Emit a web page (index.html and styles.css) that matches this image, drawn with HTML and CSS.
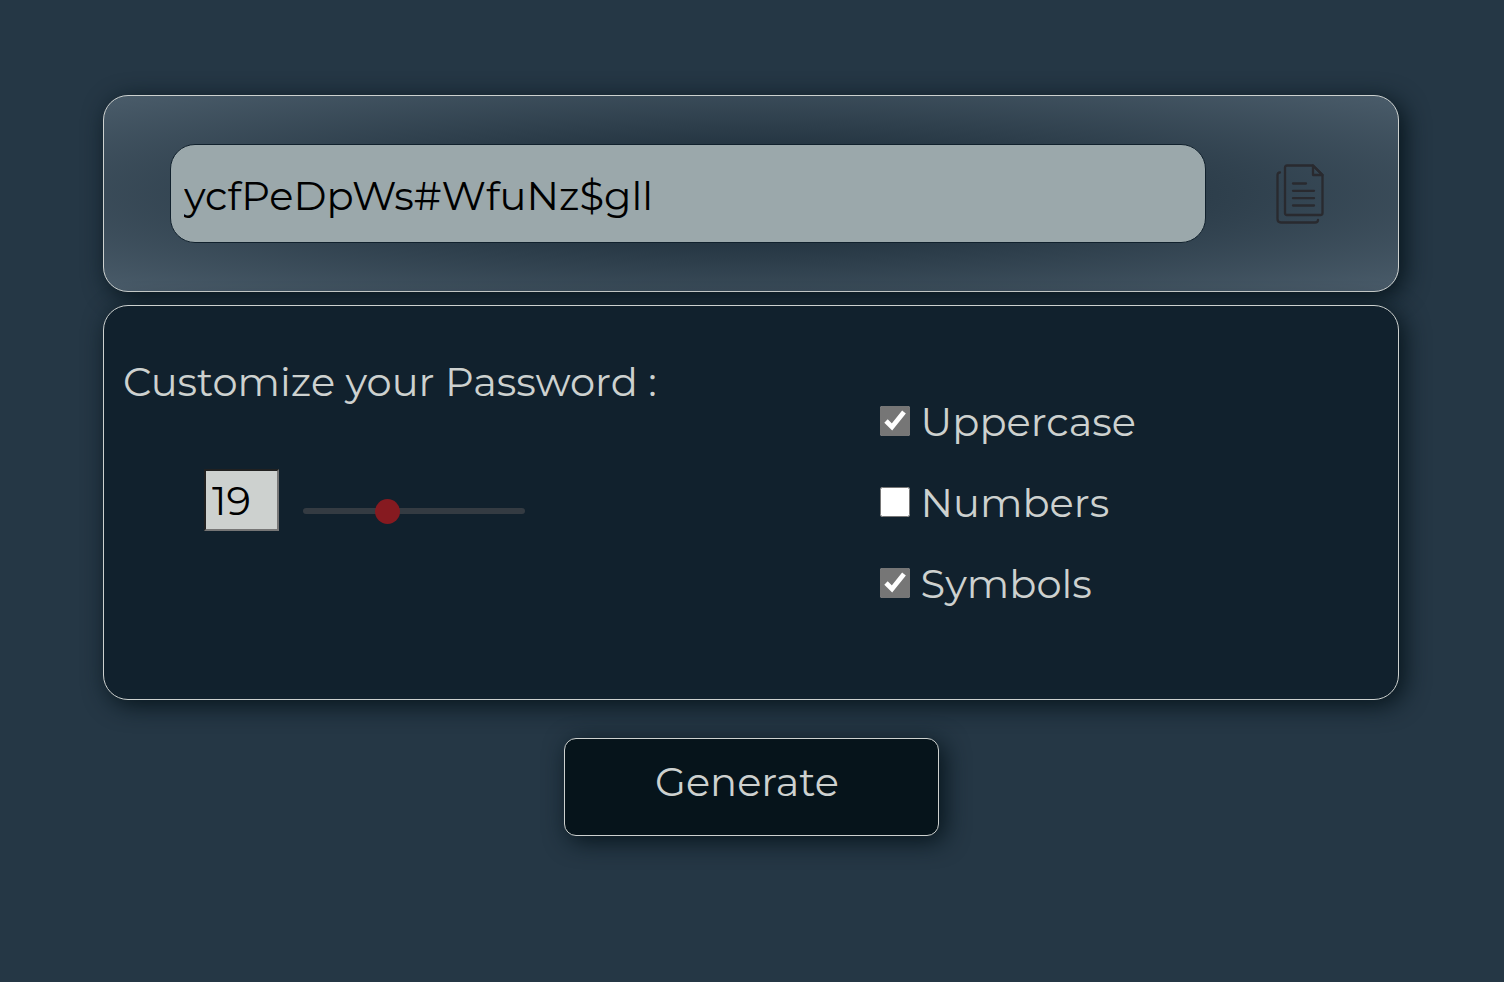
FILE: index.html
```html
<!DOCTYPE html>
<html lang="en">
<head>
<meta charset="utf-8">
<meta name="viewport" content="width=device-width, initial-scale=1">
<title>Password Generator</title>
<link rel="stylesheet" href="styles.css">
</head>
<body>
<main class="generator">
  <section class="card result">
    <input class="password" type="text" aria-label="Password" value="ycfPeDpWs#WfuNz$gll" readonly>
    <button class="copy" type="button" aria-label="Copy password">
      <svg class="copy-icon" viewBox="0 0 48 60" fill="none" stroke="currentColor" stroke-width="2.300" stroke-linecap="round" stroke-linejoin="round" aria-hidden="true">
        <path d="M11 1.500H37L46.500 11V49Q46.500 51 44.500 51H11Q9 51 9 49V3.500Q9 1.500 11 1.500Z"/>
        <path d="M37 1.500V11H46.500Z"/>
        <path d="M4 8.500Q1.500 8.500 1.500 11V55Q1.500 58.500 5 58.500H39Q42 58.500 42 56"/>
        <path d="M17 19.500H30M17 26.800H38M17 34.200H38M17 41.500H38"/>
      </svg>
    </button>
  </section>
  <section class="card options">
    <div class="length">
      <label class="heading" for="length-value">Customize your Password :</label>
      <div class="length-row">
        <input class="length-value" id="length-value" type="text" inputmode="numeric" value="19">
        <input class="slider" type="range" aria-label="Password length" min="1" max="50" value="19">
      </div>
    </div>
    <div class="checks">
      <label class="check"><input class="box" type="checkbox" checked> Uppercase</label>
      <label class="check"><input class="box" type="checkbox"> Numbers</label>
      <label class="check"><input class="box" type="checkbox" checked> Symbols</label>
    </div>
  </section>
  <button class="generate" type="button">Generate</button>
</main>
</body>
</html>
```
FILE: styles.css
```css
* { box-sizing: border-box; }

body {
  margin: 0;
  min-height: 100vh;
  background: #253745;
  color: #cdd1cf;
  font-family: Montserrat, Inter, sans-serif;
  font-size: 40px;
  font-weight: 400;
  line-height: 48px;
}

input, button { font: inherit; color: inherit; margin: 0; }

.generator {
  display: flex;
  flex-direction: column;
  padding: 95px 105px 95px 103px;
}

.card {
  border: 1px solid #cdd1cf;
  border-radius: 25px;
  box-shadow: 5px 5px 25px #06141b;
}

.result {
  display: flex;
  align-items: center;
  gap: 70px;
  margin-bottom: 13px;
  padding: 48px 74px 48px 66px;
  background: radial-gradient(#11212d, #4a5c6a);
}

.password {
  flex: 1;
  min-width: 0;
  padding: 27px 13px 22px;
  border: 1px solid #11212d;
  border-radius: 25px;
  background: #9ba8ab;
  color: #000;
}

.copy {
  display: flex;
  padding: 0;
  border: 0;
  background: none;
  color: #292a2f;
}

.copy-icon { width: 48px; height: 60px; }

.options {
  display: grid;
  grid-template-columns: 3fr 2fr;
  padding: 52px 19px 91px;
  background: #11212d;
}

.heading { display: block; }

.length-row {
  display: flex;
  align-items: center;
  gap: 24px;
  margin: 63px 0 0 81px;
}

.length-value {
  width: 75px;
  height: 62px;
  padding: 0 6px;
  border: 2px inset #767676;
  border-radius: 0;
  background: #cdd1cf;
  color: #000;
}

.slider {
  appearance: none;
  width: 222px;
  height: 6px;
  margin-top: 22px;
  border-radius: 3px;
  background: #343b42;
}

.slider::-webkit-slider-thumb {
  appearance: none;
  width: 25px;
  height: 25px;
  border-radius: 50%;
  background: #861a20;
}

.checks {
  display: flex;
  flex-direction: column;
  gap: 33px;
  padding: 40px 0 0 3px;
}

.check {
  display: flex;
  align-items: center;
  gap: 11px;
}

.box {
  width: 30px;
  height: 30px;
  margin-bottom: 2px;
  accent-color: #767676;
}

.generate {
  align-self: center;
  width: 375px;
  margin-top: 38px;
  padding: 19px 8px 29px 0;
  border: 1px solid #cdd1cf;
  border-radius: 12px;
  background: #06141b;
  box-shadow: 5px 5px 25px #06141b;
}
```
